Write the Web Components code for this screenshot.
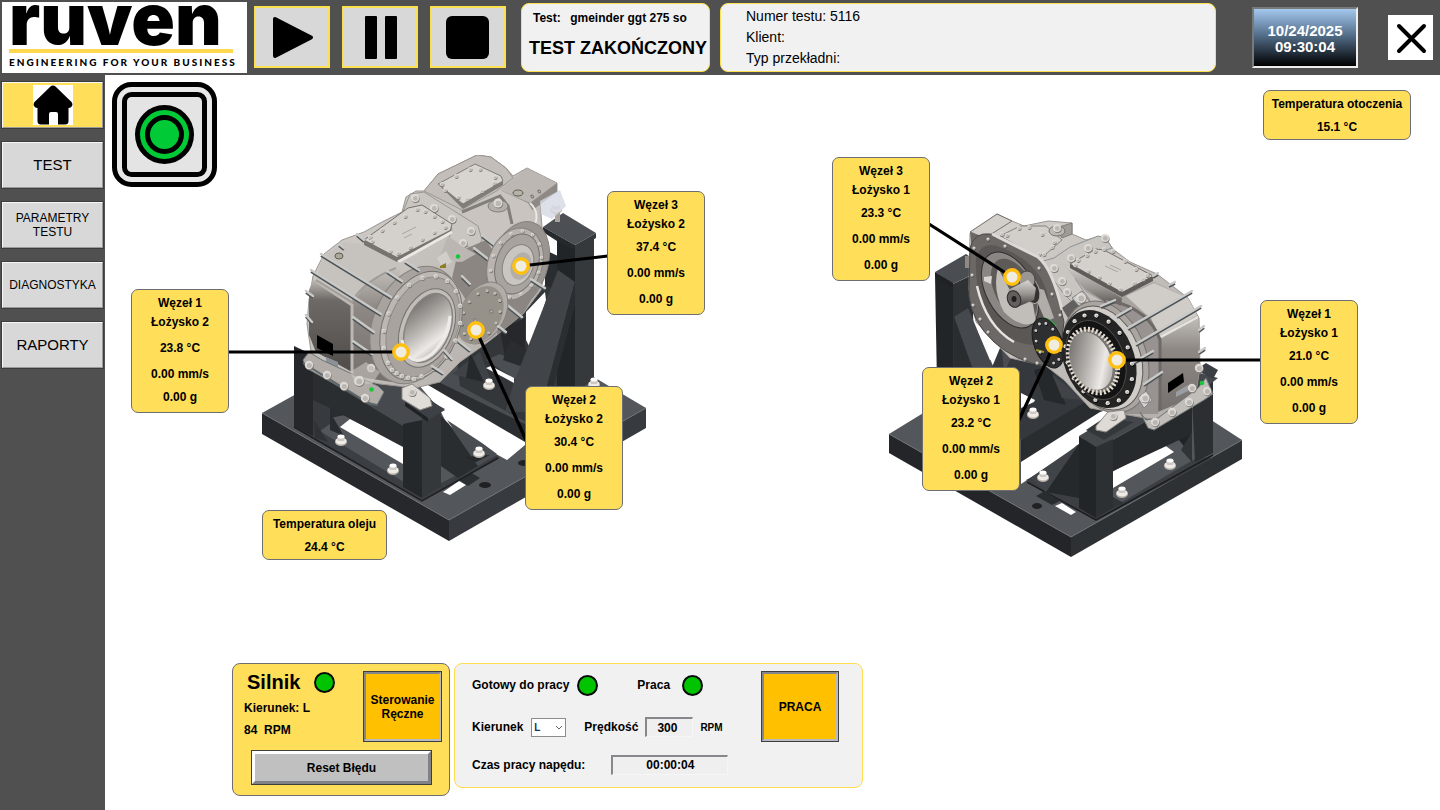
<!DOCTYPE html>
<html lang="pl">
<head>
<meta charset="utf-8">
<title>Ruven – stanowisko testowe</title>
<style>
  body { margin: 0; background: #fff; color: #000; font-family: "Liberation Sans", Arial, sans-serif; font-size: 12px; }
</style>
</head>
<body>
<hmi-app></hmi-app>

<script>
const define = (name, html) => {
  const tpl = document.createElement('template');
  tpl.innerHTML = '<style>*{box-sizing:border-box}</style>' + html;
  customElements.define(name, class extends HTMLElement {
    constructor() {
      super();
      this.attachShadow({ mode: 'open' }).append(tpl.content.cloneNode(true));
    }
  });
};

/* ---------- drawing helpers ---------- */
const poly = (pts, fill, extra = '') => `<polygon points="${pts}" fill="${fill}" ${extra}/>`;
const ell = (cx, cy, rx, ry, rot, fill, extra = '') =>
  `<ellipse cx="${cx}" cy="${cy}" rx="${rx}" ry="${ry}" transform="rotate(${rot} ${cx} ${cy})" fill="${fill}" ${extra}/>`;
const bolt = (x, y, r = 2, light = '#dedbd7', dark = '#7f7b78') =>
  `<circle cx="${x + 0.6}" cy="${y + 1}" r="${r}" fill="${dark}"/><circle cx="${x}" cy="${y}" r="${r}" fill="${light}"/><circle cx="${x + 0.3}" cy="${y + 0.4}" r="${r * 0.6}" fill="#bab6b2"/>`;
const bolts = (list, r, l, d) => list.map(([x, y]) => bolt(x, y, r, l, d)).join('');
const boltRing = (cx, cy, rx, ry, rot, n, r, l, d) => {
  const a = rot * Math.PI / 180, out = [];
  for (let i = 0; i < n; i++) {
    const t = i * 2 * Math.PI / n, x = rx * Math.cos(t), y = ry * Math.sin(t);
    out.push([+(cx + x * Math.cos(a) - y * Math.sin(a)).toFixed(1), +(cy + x * Math.sin(a) + y * Math.cos(a)).toFixed(1)]);
  }
  return bolts(out, r, l, d);
};
const rib = (x1, y1, x2, y2) =>
  `<path d="M${x1} ${y1 + 1.8}L${x2} ${y2 + 1.8}" stroke="#4d5355" stroke-width="2.4"/><path d="M${x1} ${y1}L${x2} ${y2}" stroke="#c9c9c8" stroke-width="2.4" stroke-linecap="round"/>`;
const anchor = (x, y) =>
  `<ellipse cx="${x}" cy="${y + 2}" rx="6" ry="4" fill="#b7b0aa"/><ellipse cx="${x}" cy="${y + 1}" rx="5.5" ry="3.4" fill="#efebe7"/><rect x="${x - 3.5}" y="${y - 4}" width="7" height="5" rx="1.5" fill="#cfc8c2"/><ellipse cx="${x}" cy="${y - 3.5}" rx="3.5" ry="2" fill="#fff"/>`;
const lead = (x1, y1, x2, y2) => `<path d="M${x1} ${y1}L${x2} ${y2}" stroke="#000" stroke-width="3.2"/>`;
const pin = (x, y) => `<circle cx="${x}" cy="${y}" r="7.2" fill="#f0ece0" stroke="#ffc010" stroke-width="3.4"/>`;

const defs = id => `<defs>
  <linearGradient id="side${id}" x1="0" y1="0" x2="0" y2="1"><stop offset="0" stop-color="#bdb8b3"/><stop offset=".22" stop-color="#6d6966"/><stop offset="1" stop-color="#4f4b49"/></linearGradient>
  <linearGradient id="end${id}" x1="0" y1="0" x2="0" y2="1"><stop offset="0" stop-color="#c4c0bb"/><stop offset=".35" stop-color="#8d8884"/><stop offset="1" stop-color="#75706d"/></linearGradient>
  <linearGradient id="top${id}" x1="0" y1="0" x2="1" y2="1"><stop offset="0" stop-color="#d6d2cd"/><stop offset="1" stop-color="#b1aca7"/></linearGradient>
  <linearGradient id="bore${id}" x1="0" y1="0" x2="1" y2="1"><stop offset="0" stop-color="#5d5a58"/><stop offset=".45" stop-color="#b5b1ad"/><stop offset=".7" stop-color="#ece9e6"/><stop offset="1" stop-color="#8b8682"/></linearGradient>
  <linearGradient id="tube${id}" x1="0" y1="0" x2="0" y2="1"><stop offset="0" stop-color="#d8d5d2"/><stop offset=".5" stop-color="#9a9692"/><stop offset="1" stop-color="#403d3c"/></linearGradient>
</defs>`;

/* gearbox seen from the side of the "Łożysko 2" bearings */
const leftMachine = () => defs('L') + [
  // base frame
  poly('262,413 298,393 420,335 592,376 646,408 449,520', '#53565b'),
  poly('262,413 449,520 449,541 262,434', '#26282b'),
  poly('449,520 646,408 646,428 449,541', '#373b3f'),
  '<path d="M262 413L449 520L646 408" fill="none" stroke="#6d7176"/>',
  // rear rail and stand
  poly('418,366 455,350 525,410 525,426 420,374', '#4a4d52'),
  poly('418,372 525,424 525,444 418,384', '#2b2e31'),
  poly('418,384 428,385 525,442 525,445 507,460 474,442 447,424 441,412 430,398', '#fff'),
  poly('455,345 500,330 545,285 560,262 560,385 526,422 460,386', '#33373a'),
  poly('500,330 525,318 525,355 508,372', '#26282b'),
  poly('452,374 480,352 492,384', '#3f4347'),
  poly('470,352 484,382 466,378', '#26292b'),
  poly('486,360 500,354 540,372 535,392', '#4b4e53'),
  poly('486,368 491,366 514,378 514,383', '#fff'),
  poly('510,340 531,352 520,366 503,360', '#2a2d30'),
  poly('526,312 545,292 546,300 531,350 526,340', '#fff'),
  poly('545,250 558,256 558,290 545,285', '#2a2d30'),
  poly('557,238 575,246 575,392 557,392', '#222527'),
  poly('575,246 594,238 594,380 575,392', '#35393c'),
  poly('558,270 575,282 540,412 505,412 513,385', '#414549'),
  poly('575,282 575,305 552,392 540,412', '#2b2e31'),
  poly('543,227 563,213 596,233 575,245', '#4c5055'),
  poly('543,227 575,245 575,250 560,243 543,232', '#26292c'),
  poly('575,245 596,233 596,238 575,250', '#35393c'),
  '<rect x="555" y="205" width="5" height="17" fill="#aaa49f"/>', anchor(556, 208),
  anchor(489, 384), anchor(594, 383),
  // holes through the front frame
  poly('350,419 403,446 403,464 340,427', '#fff'),
  poly('443,492 450,495 466,485 459,481', '#fff'),
  poly('459,480 470,472 480,478 468,486', '#2c2f32'),
  poly('295,428 308,424 404,482 423,492 497,455 500,458 422,501', '#3b3f43'),
  '<path d="M294 427L422 501L498 458" fill="none" stroke="#1d1f21" stroke-width="1.5"/>',
  '<ellipse cx="485" cy="485" rx="6" ry="3" fill="#1f2123"/><ellipse cx="524" cy="463" rx="6" ry="3" fill="#1f2123"/>',
  // front stand
  poly('294,346 313,355 313,436 294,427', '#25272a'),
  poly('313,355 330,362 330,424 313,436', '#373b3f'),
  poly('314,420 328,442 315,438', '#2f3235'), poly('330,412 344,436 330,430', '#2a2d30'),
  poly('330,392 352,408 360,412 330,418', '#2a2d30'),
  poly('313,372 403,424 403,447 330,408 313,400', '#2b2e31'),
  poly('313,372 350,360 445,409 422,420 403,426', '#46494e'),
  poly('403,424 422,420 422,498 403,487', '#25282a'),
  poly('422,418 441,410 441,486 422,498', '#34383b'),
  poly('405,402 422,394 445,410 428,420', '#3d4145'), poly('405,402 428,418 428,422 405,406', '#1f2123'),
  poly('441,416 449,424 478,466 458,478 441,466', '#2a2d30'),
  poly('447,420 482,443 497,454 478,466', '#4a4d52'),
  poly('465,457 490,455 476,462', '#26292b'),
  anchor(341, 440), anchor(393, 469), anchor(479, 452),
  // casing silhouette
  poly('307,324 309,300 313,276 324,254 342,240 364,232 382,222 402,212 406,197 416,191 424,191 438,174 477,155 491,157 506,168 513,176 527,168 557,183 557,192 540,201 543,240 546,262 541,290 523,314 497,335 484,345 460,362 440,382 415,388 380,384 340,376 314,372', 'url(#topL)', 'stroke="#9a9692"'),
  // upper cover block
  poly('424,191 438,174 477,155 491,157 506,168 513,178 495,192 462,210', '#c3beb9', 'stroke="#9a9692"'),
  poly('438,184 475,164 501,176 503,181 463,204', '#d8d4cf', 'stroke="#7f7b78"'),
  poly('438,184 463,204 503,181 503,185 463,209', '#817d79'),
  bolts([[442,184],[456,176],[470,169],[480,169],[495,177],[494,183],[482,191],[467,199],[458,197],[445,190]], 2),
  // rear bracket
  poly('500,192 527,168 557,183 557,192 530,212', '#8e8985'), poly('500,190 527,168 557,183 530,203', '#bcb7b2'),
  poly('540,201 560,190 566,206 552,219 541,214', '#d5d8e2', 'opacity=".8"'),
  ell(518, 193, 5, 3, 0, '#b5b3a6', 'stroke="#5e5e55"'), bolts([[532,196],[539,191]], 1.6, '#6a6663'),
  // upper shoulder
  poly('462,210 500,190 528,203 541,224 520,230 500,245 486,262 470,254', '#c9c4bf'),
  '<path d="M462 212L500 196L508 206L512 224" fill="none" stroke="#827e7a" stroke-width="3"/><path d="M530 203Q542 214 532 230" fill="none" stroke="#e8e6e3" stroke-width="2"/>',
  ell(498, 206, 10, 6, 0, '#b4afab', 'stroke="#827e7a"'), bolt(498, 203, 4.5),
  // joint flange
  poly('403,212 410,194 424,192 478,226 482,240 476,252 464,244 456,252 448,242 452,228 424,206', '#c9c5c0', 'stroke="#9a9692"'),
  bolts([[415,198],[434,208],[452,219],[471,231],[463,243]], 4),
  // main cover plate
  poly('364,240 408,208 422,205 452,224 450,232 397,258', '#d4d0cb', 'stroke="#75716e"'),
  poly('364,240 397,257 450,230 450,234 397,262 364,245', '#77736f'),
  bolts([[370,237],[382,230],[394,222],[405,216],[417,209],[425,211],[434,216],[442,221],[445,227],[434,232],[422,239],[410,247],[398,253],[390,251],[372,241]], 2),
  '<path d="M402 234l14-7M404 238l8-4" stroke="#aaa5a0"/>',
  '<path d="M398 262L452 232" stroke="#e9e7e4" stroke-width="3"/>',
  // left end of the casing
  poly('322,258 344,242 362,244 395,262 420,264 384,276 366,284 352,304 316,282', '#c6c2bd'),
  poly('309,290 313,280 319,281 352,303 352,372 316,352 309,335', 'url(#sideL)'),
  poly('352,303 368,282 400,268 392,382 352,376', 'url(#endL)'),
  '<path d="M317 282L352 305V374" fill="none" stroke="#bcb7b3" stroke-width="3"/>',
  '<path d="M316 280L352 302Q362 282 396 268" fill="none" stroke="#a29d99" stroke-width="2"/>',
  ell(339, 256, 4, 3, 0, '#a9a99b', 'stroke="#5e5e55"'),
  poly('317,335 333,344 333,356 317,348', '#000'), poly('326,357 338,362 338,368 326,363', '#8d9096'),
  // linking valley
  poly('458,252 486,240 498,258 492,284 466,300 452,278', '#8b8682'),
  poly('448,236 462,246 476,254 462,262 440,256', '#bbb6b1'),
  rib(482, 235, 496, 246), rib(474, 248, 492, 262), rib(462, 276, 470, 284),
  poly('437,258 446,251 452,262 442,268', '#d1cdc8'), poly('440,266 446,263 446,268 440,268', '#8d7d23'),
  '<circle cx="458" cy="256" r="6" fill="#bdb8b3"/><circle cx="458" cy="256.500" r="2.300" fill="#19c83a"/>',
  // upper shaft flange
  ell(518, 266, 29, 46, 20, '#9a9591', 'stroke="#85817d"'),
  poly('500,300 540,285 523,314 497,335', '#8b8682'),
  ell(515, 264, 27, 37, 20, '#b9b4af', 'stroke="#85817d"'),
  ell(517, 264, 21, 31, 20, '#a8a39f', 'stroke="#75716e"'),
  boltRing(516, 264, 24, 34, 20, 14, 1.8),
  ell(518, 265, 15, 21, 20, '#c9c5c0', 'stroke="#85817d"'),
  ell(521, 266, 10, 14, 20, '#b3aeaa'),
  rib(506, 304, 522, 317), rib(531, 279, 545, 288),
  // middle bearing cover
  ell(483, 313, 22, 33, 28, '#b2ada9', 'stroke="#85817d"'),
  ell(480, 315, 21, 31, 28, '#979289'),
  boltRing(481, 315, 17, 26, 28, 13, 1.5, '#c5c0bb', '#5e5a58'),
  bolts([[491,311],[475,320]], 1.8, '#77736f'),
  rib(455, 338, 470, 350), rib(498, 326, 506, 332),
  // main flange
  ell(415, 325, 42, 61, 22, '#a8a39f', 'stroke="#85817d"'),
  ell(421, 326, 38, 57, 22, '#bcb7b2', 'stroke="#75716e"'),
  ell(423, 327, 34, 52, 22, '#a8a39f', 'stroke="#8f8b87"'),
  boltRing(422, 327, 36, 53, 22, 18, 2.2),
  ell(427, 328, 26, 41, 22, '#c2bdb9', 'stroke="#75716e"'),
  ell(428, 328, 22, 36, 22, 'url(#boreL)', 'stroke="#85817d" stroke-width="1.5"'),
  '<path d="M402 340Q408 372 432 354Q448 338 450 316" fill="none" stroke="#eeecea" stroke-width="3"/>',
  // cooling ribs
  rib(321, 254, 391, 297), rib(311, 270, 381, 314), rib(306, 291, 313, 296), rib(306, 315, 312, 322),
  rib(339, 244, 344, 248), rib(357, 234, 364, 240), rib(405, 261, 419, 270), rib(387, 271, 402, 281),
  rib(353, 317, 374, 332), rib(353, 341, 372, 354), rib(444, 350, 452, 359), rib(432, 366, 443, 373),
  // feet
  poly('303,360 309,352 322,360 378,386 384,392 377,405 368,402 306,368', '#b1aca8', 'stroke="#6d7476"'),
  '<path d="M303 363L370 404L378 405" fill="none" stroke="#5d6668" stroke-width="2"/>',
  bolts([[309,365],[327,375],[344,386],[365,398],[360,380],[371,368]], 4.2),
  poly('350,372 366,362 380,372 372,384 356,384', '#c9c5c0', 'opacity=".6"'), bolt(359, 381, 5),
  '<circle cx="371.500" cy="389.500" r="2.300" fill="#19c83a"/>',
  poly('402,388 412,384 430,398 432,406 420,410 402,399', '#e0ddd9', 'stroke="#8d8986"'), bolt(412, 392, 4), bolts([[392,370],[402,376],[414,379]], 2.2),
].join('');

/* gearbox seen from the side of the "Łożysko 1" bearings */
const rightMachine = () => defs('R') + [
  poly('889,434 938,404 1000,352 1120,360 1205,416 1242,440 1071,537', '#53565b'),
  poly('889,434 1071,537 1071,557 889,453', '#232528'),
  poly('1071,537 1242,440 1242,459 1071,557', '#2d3134'),
  '<path d="M889 434L1071 537L1242 440" fill="none" stroke="#6d7176"/>',
  // rear column and rail
  poly('935,275 953,284 953,384 937,384', '#222527'), poly('953,284 972,275 975,384 953,384', '#2e3235'),
  poly('935,272 966,254 986,268 953,284', '#4a4d52'), poly('935,272 953,283 953,288 935,277', '#1f2123'),
  '<rect x="965" y="256" width="5" height="12" fill="#8f8a86"/>',
  poly('954,317 968,308 1000,384 978,384', '#45484d'), poly('954,317 978,384 954,384', '#2a2d30'),
  poly('978,331 994,342 1002,352 994,368', '#fff'),
  poly('1000,348 1060,362 1100,396 1021,440 990,372', '#35393d'),
  poly('1034,370 1050,366 1066,405 1044,400', '#26292b'), poly('1052,374 1084,400 1062,398', '#404448'),
  poly('1002,350 1014,350 1004,374', '#4a4d52'),
  poly('1021,408 1034,402 1035,400 1021,393', '#fff'), poly('1021,440 1092,398 1110,408 1021,462', '#2a2d30'),
  poly('1021,462 1100,412 1124,404 1122,414 1088,434 1079,449 1030,478 1021,484', '#fff'),
  anchor(1033, 413),
  poly('1026,480 1044,471 1112,508 1198,457 1213,458 1096,521', '#3b3f43'),
  '<path d="M1027 482L1096 520L1213 455" fill="none" stroke="#1a1c1e" stroke-width="1.500"/>',
  poly('1112,472 1163,444 1174,452 1113,488', '#fff'), poly('1055,506 1062,503 1076,512 1071,515', '#fff'),
  poly('1036,496 1045,491 1060,501 1052,505', '#2a2d30'),
  '<ellipse cx="1037" cy="506" rx="5" ry="3" fill="#1f2123"/>',
  poly('1076,446 1079,444 1079,498 1046,492', '#26292b'), poly('1068,452 1079,444 1046,492 1030,478', '#404448'),
  // front stand
  poly('1179,404 1192,398 1192,456 1179,440', '#202325'), poly('1192,398 1213,378 1213,453 1195,462', '#2b2f32'),
  poly('1113,440 1192,396 1192,434 1113,471', '#272a2d'), poly('1079,436 1106,420 1196,372 1218,378 1200,392 1096,448', '#44474c'),
  poly('1079,436 1096,447 1096,518 1079,508', '#222527'), poly('1096,447 1113,439 1113,508 1096,518', '#2c3033'),
  poly('1181,450 1192,432 1192,462', '#303437'), poly('1113,497 1124,503 1113,508', '#303437'),
  poly('1196,370 1206,363 1218,370 1213,379', '#3b3f43'),
  poly('1086,430 1104,418 1134,422 1104,440', '#34383b'),
  anchor(1043, 476), anchor(1122, 492), anchor(1170, 464),
  // casing silhouette
  poly('970,233 997,214 1012,221 1024,226 1048,221 1072,223 1072,234 1086,240 1103,236 1114,250 1130,262 1157,274 1188,298 1199,318 1200,368 1196,392 1157,420 1122,414 1090,408 1064,380 1046,366 1010,358 976,322 969,290', 'url(#topR)', 'stroke="#9a9692"'),
  poly('970,232 997,214 1012,221 985,238', '#d3cfca', 'stroke="#75716e"'), poly('970,232 985,238 972,250', '#6b6764'),
  poly('1056,228 1072,223 1072,234 1062,238', '#a09b97', 'stroke="#7f7b78"'),
  // upper cover
  poly('1000,236 1020,226 1046,226 1062,240 1046,254 1036,256', '#d2cec9', 'stroke="#85817d"'),
  bolts([[1002,234],[1007,235],[1019,228],[1029,227],[1042,234],[1054,242],[1052,247],[1044,254],[1039,254]], 2),
  ell(1057, 231, 8, 5, 0, '#bcb7b2', 'stroke="#75716e"'), bolt(1057, 228, 4),
  poly('1062,248 1092,240 1130,262 1108,262 1078,258', '#cfcbc6'),
  // joint flange
  poly('1040,262 1054,258 1070,247 1098,236 1106,238 1112,248 1072,262 1076,280 1084,292 1090,300 1078,308 1064,294', '#c9c5c0', 'stroke="#8d9396"'),
  bolts([[1105,238],[1088,248],[1071,258],[1054,268],[1062,281],[1067,292]], 4),
  // casing valley and main cover
  poly('1064,264 1122,296 1154,282 1188,298 1160,320 1120,312 1086,292', '#a8a39f'),
  poly('1064,264 1122,298 1120,312 1084,288', 'url(#tubeR)'),
  poly('1070,264 1096,249 1104,250 1153,276 1123,293', '#d4d0cb', 'stroke="#75716e"'),
  poly('1070,264 1122,292 1153,276 1153,281 1122,297 1070,268', '#5f5c59'),
  bolts([[1078,260],[1087,255],[1095,251],[1104,249],[1113,251],[1125,261],[1136,269],[1147,275],[1143,279],[1134,283],[1120,289],[1109,283],[1099,277],[1088,271],[1075,265]], 2),
  '<path d="M1105 266l13 6M1110 265l11 5" stroke="#a9a49f"/>',
  ell(1147, 309, 5, 3, 0, '#a5a593', 'stroke="#5e5e55"'),
  // right end of the casing
  poly('1126,296 1154,283 1188,298 1197,315 1160,337 1150,318', '#d0ccc8'),
  poly('1160,338 1198,316 1200,368 1195,396 1158,412', 'url(#endR)'),
  poly('1106,300 1150,316 1160,338 1158,414 1124,414', '#989390'),
  '<path d="M1110 300Q1150 310 1160 340V410" fill="none" stroke="#6d6966" stroke-width="3"/><path d="M1161 337L1198 317" stroke="#e6e4e1" stroke-width="2"/>',
  poly('1168,383 1183,373 1184,382 1168,393', '#000'), poly('1176,392 1188,385 1188,391 1176,397', '#9a9da3'),
  // open bell housing
  '<path d="M970 248Q974 232 990 234L1036 256Q1050 266 1056 290L1064 322Q1062 352 1046 366Q1016 362 994 342Q972 322 969 296Z" fill="#6b6866" stroke="#4b4948"/>',
  '<path d="M992 234L1038 257Q1052 268 1062 310" fill="none" stroke="#dcd9d6" stroke-width="3"/>',
  '<path d="M976 258Q982 240 1000 247Q1040 262 1048 296L1050 340Q1030 352 1002 334Q974 310 976 258Z" fill="#5a5755"/>',
  '<path d="M977 286Q986 326 1014 342" fill="none" stroke="#e6e3e0" stroke-width="2.500"/>',
  ell(1010, 290, 24, 41, -28, '#8a8683', 'stroke="#33302f"'),
  ell(1014, 290, 19, 34, -28, '#5d5a58'),
  '<path d="M998 268Q992 290 1004 312Q1022 330 1036 322L1032 298L1012 294Z" fill="#c1bdb9"/>',
  poly('984,277 992,276 991,284 984,281', '#d8d5d2'), poly('1030,286 1044,290 1054,318 1046,322', '#b1ada9'),
  ell(1031, 290, 8, 14, -20, '#353331', 'stroke="#aaa6a2"'), ell(1027, 280, 8, 9, 0, '#9a9692', 'stroke="#4b4948"'),
  poly('1008,290 1028,280 1036,288 1034,300 1017,307', 'url(#tubeR)'),
  ell(1014, 299, 6.5, 8.5, -20, '#625f5d', 'stroke="#2d2b2a"'), ell(1014, 299, 2.5, 3, 0, '#201f1e'),
  bolts([[974,248],[988,239],[1005,246],[1039,268],[1052,294],[1060,315],[1037,363],[1025,359],[988,332],[980,319],[973,305],[972,275],[1050,352]], 1.5, '#e9e6e3', '#4b4948'),
  // middle cover
  '<path d="M1036 321Q1046 314 1056 326" fill="none" stroke="#3f9a4b" stroke-width="2"/>',
  ell(1048, 343, 14, 26, -20, '#2e2f30', 'stroke="#1b1b1c"'), '<path d="M1036 350l8 2" stroke="#9a9320" stroke-width="2"/>',
  boltRing(1048, 343, 11, 21, -20, 11, 1.4, '#d8d4d0', '#111'),
  poly('1062,308 1078,296 1090,302 1068,318', '#62605e'), poly('1072,298 1082,291 1090,302 1080,307', '#cfcbc6', 'stroke="#7d8386"'), bolt(1081, 298, 5),
  // main flange and splined bore
  ell(1106, 357, 40, 58, -22, '#aaa5a1', 'stroke="#75716e"'), ell(1103, 358, 37, 54, -22, '#d0ccc8', 'stroke="#5d5a58"'),
  ell(1099, 359, 35, 51, -22, '#242425'),
  boltRing(1099, 359, 31, 46, -22, 17, 2.1, '#efece9', '#000'),
  ell(1096, 360, 28, 41, -22, '#141415', 'stroke="#4b4948"'),
  ell(1093, 361, 23, 33, -22, '#77736f'),
  ell(1093, 361, 23, 33, -22, 'none', 'stroke="#e5ddd2" stroke-width="5" stroke-dasharray="2 2"'),
  ell(1091, 361, 20, 30, -22, 'url(#boreR)'),
  // cooling ribs
  rib(1192, 291, 1128, 328), rib(1201, 306, 1136, 344), rib(1204, 326, 1199, 330), rib(1205, 348, 1199, 352),
  rib(1158, 273, 1153, 276), rib(1175, 282, 1169, 285), rib(1115, 300, 1101, 306), rib(1131, 308, 1117, 316),
  rib(1153, 351, 1134, 362), rib(1162, 372, 1144, 384),
  // feet
  poly('1140,412 1146,420 1158,418 1198,388 1206,378 1213,394 1204,400 1154,430 1148,428', '#c1bdb9', 'stroke="#6d7476"'),
  bolts([[1155,422],[1172,412],[1189,402],[1207,391],[1192,388],[1199,368]], 4.2),
  poly('1138,398 1146,391 1152,400 1144,408', '#d8d5d1', 'stroke="#7d8386"'), bolt(1145, 398, 4.6),
  '<circle cx="1202" cy="383" r="2.300" fill="#19c83a"/>',
  poly('1096,426 1108,412 1124,410 1126,418 1106,432 1096,430', '#dedbd7', 'stroke="#8d8986"'), bolt(1113, 416, 4),
].join('');

/* ---------- small parts ---------- */
define('info-tile', `
<style>
  :host { display: block; border: 1px solid #6e6d72; border-radius: 7px; background: #ffde59; padding: 4px 0 0; font-weight: bold; text-align: center; }
  ::slotted(p) { margin: 0; line-height: 26px; }
  ::slotted(h3) { margin: 0; font-size: 12px; line-height: 19px; }
</style><slot></slot>`);

define('led-lamp', `
<style>:host { display: block; width: 21px; height: 21px; border: 2px solid #0a0a0a; border-radius: 50%; background: #00c400; box-sizing: border-box; flex: none; }</style>`);

define('light-box', `
<style>:host { display: block; width: 105px; height: 105px; } svg { display: block; }</style>
<svg viewBox="0 0 105 105" width="105" height="105" role="img" aria-label="Lampka gotowości">
  <rect x="2.500" y="2.500" width="100" height="100" rx="17" fill="#e9e9e9" stroke="#000" stroke-width="5"/>
  <rect x="12.500" y="12.500" width="80" height="80" rx="7" fill="#e4e4e4" stroke="#000" stroke-width="5"/>
  <circle cx="52.500" cy="52.500" r="27" fill="#00ca36" stroke="#000" stroke-width="5"/>
  <circle cx="52.500" cy="52.500" r="17" fill="#00ca36" stroke="#000" stroke-width="5"/>
</svg>`);

define('nav-button', `
<style>
  :host { display: block; }
  button { display: block; width: 100%; height: 46px; padding: 0; font: inherit; line-height: 14px; color: #000; background: #d8d8d8; border: 1px solid; border-color: #f6f6f6 #9a9a9a #9a9a9a #f6f6f6; box-shadow: 0 0 0 1px #3c3c3c; }
  :host([active]) button { background: #ffde59; }
  :host([large]) button { font-size: 15px; }
  ::slotted(svg) { display: block; margin: 0 auto; }
</style><button type="button"><slot></slot></button>`);

define('media-button', `
<style>
  :host { display: block; }
  button { display: block; width: 76px; height: 62px; padding: 0; background: #d8d8d8; border: 2px solid #fbe04f; }
  ::slotted(svg) { display: block; }
</style><button type="button"><slot></slot></button>`);

define('ruven-logo', `
<style>
  :host { display: block; box-sizing: border-box; width: 245px; height: 71px; padding: 0 7px; background: #fff; }
  .name { height: 45px; font: 900 72px/34px Inter, sans-serif; white-space: nowrap; }
  .bar { width: 224px; height: 4px; margin: 2px 0 3px; background: #ffd84f; }
  .tag { font: 900 10px/13px Lato, sans-serif; letter-spacing: 2px; white-space: nowrap; }
</style>
<div class="name">ruven</div><div class="bar"></div><div class="tag">ENGINEERING FOR YOUR BUSINESS</div>`);

define('top-bar', `
<style>
  :host { display: flex; align-items: center; height: 75px; box-sizing: border-box; padding: 0 7px 1px 2px; background: #505050; }
  .media { display: flex; gap: 12px; margin: 0 15px 0 7px; }
  .card { height: 69px; border: 1px solid #fbe04f; border-radius: 8px; background: #f1f1f1; }
  .status { width: 189px; margin-right: 10px; padding: 4px 0 0 7px; font-weight: bold; white-space: nowrap; }
  .status p { margin: 0 0 5px 4px; line-height: 20px; }
  .status span { margin-left: 6px; }
  .status strong { display: block; font-size: 18px; line-height: 30px; }
  .info { flex: 1; min-width: 0; padding: 2px 0 0 25px; font-size: 14px; line-height: 21px; }
  .info p { margin: 0; }
  time { display: block; width: 106px; height: 61px; margin: 0 30px 0 36px; padding-top: 14px; border: 2px solid; border-color: #77797b #eee #eee #77797b; background: linear-gradient(#a5c8ee, #55708c 45%, #000); color: #fff; font-weight: bold; font-size: 15px; line-height: 16px; text-align: center; }
  .close { width: 45px; height: 45px; padding: 0; border: 0; background: #fff; }
  .close svg { display: block; }
</style>
<ruven-logo></ruven-logo>
<div class="media">
  <media-button><svg width="72" height="58" viewBox="0 0 72 58" role="img" aria-label="Start"><path d="M19 11V48L55 29.500Z" stroke="#000" stroke-width="4" stroke-linejoin="round"/></svg></media-button>
  <media-button><svg width="72" height="58" viewBox="0 0 72 58" role="img" aria-label="Pauza"><rect x="21" y="8" width="12" height="43" rx="1"/><rect x="41" y="8" width="12" height="43" rx="1"/></svg></media-button>
  <media-button><svg width="72" height="58" viewBox="0 0 72 58" role="img" aria-label="Stop"><rect x="14" y="8" width="43" height="43" rx="6"/></svg></media-button>
</div>
<section class="card status"><p>Test: <span>gmeinder ggt 275 so</span></p><strong>TEST ZAKOŃCZONY</strong></section>
<section class="card info"><p>Numer testu: 5116</p><p>Klient:</p><p>Typ przekładni:</p></section>
<time datetime="2025-10-24T09:30:04">10/24/2025<br>09:30:04</time>
<button class="close" type="button" aria-label="Zamknij"><svg width="45" height="45" viewBox="0 0 45 45"><path d="M11 11L36 36M36 11L11 36" stroke="#000" stroke-width="4" stroke-linecap="round"/></svg></button>`);

define('side-nav', `
<style>
  :host { display: block; background: #505050; width: 105px; box-sizing: border-box; padding: 7px 2px 0; }
  nav { display: grid; gap: 14px; }
</style>
<nav>
  <nav-button active><svg width="40" height="40" viewBox="0 0 40 40" role="img" aria-label="Start"><rect width="40" height="40" fill="#fff"/><path d="M17.500 1.500Q20 -0.500 22.500 1.500L38.500 17Q40 19 39 21Q38 23 35.500 23V36Q35.500 39.500 32 39.500H25V29Q25 27 23 27H18Q16 27 16 29V39.500H8Q4.500 39.500 4.500 36V23Q2 23 1 21Q0 19 1.500 17Z"/></svg></nav-button>
  <nav-button large>TEST</nav-button>
  <nav-button>PARAMETRY<br>TESTU</nav-button>
  <nav-button>DIAGNOSTYKA</nav-button>
  <nav-button large>RAPORTY</nav-button>
</nav>`);

/* a drawing with measuring points; tiles sit over it */
const card = (cls, w, b, t) =>
  `<info-tile class="${cls}"><h3>Węzeł ${w}</h3><h3>Łożysko ${b}</h3><p>${t} °C</p><p>0.00 mm/s</p><p>0.00 g</p></info-tile>`;
const viewStyle = `
  :host { display: block; position: relative; height: 405px; flex: none; }
  svg { display: block; }
  info-tile { position: absolute; box-sizing: border-box; width: 98px; height: 124px; }`;

define('left-view', `
<style>${viewStyle}
  :host { width: 576px; }
  .a { left: 1px; top: 134px; } .b { left: 477px; top: 36px; } .c { left: 395px; top: 231px; }
  .a p:nth-of-type(1) { line-height: 32px; }
  .a p:nth-of-type(2) { line-height: 20px; }
  .oil { left: 132px; top: 355px; width: 125px; height: 50px; }
</style>
<svg width="576" height="405" viewBox="130 155 576 405" role="img" aria-label="Przekładnia, strona 2">
${leftMachine()}${lead(229, 352, 401, 352)}${lead(476, 330, 526, 440)}${lead(521, 266, 608, 256)}${pin(401, 352)}${pin(476, 330)}${pin(521, 266)}</svg>
${card('a', 1, 2, '23.8')}${card('b', 3, 2, '37.4')}${card('c', 2, 2, '30.4')}
<info-tile class="oil"><h3>Temperatura oleju</h3><p>24.4 °C</p></info-tile>`);

define('right-view', `
<style>${viewStyle}
  :host { width: 526px; }
  .a { left: 0; top: 2px; } .b { left: 90px; top: 212px; } .c { left: 428px; top: 145px; }
</style>
<svg width="526" height="405" viewBox="832 155 526 405" role="img" aria-label="Przekładnia, strona 1">
${rightMachine()}${lead(929, 224, 1012, 277)}${lead(1054, 345, 1019, 420)}${lead(1117, 360, 1262, 360)}${pin(1012, 277)}${pin(1054, 345)}${pin(1117, 360)}</svg>
${card('a', 3, 1, '23.3')}${card('b', 2, 1, '23.2')}${card('c', 1, 1, '21.0')}`);

define('action-button', `
<style>
  :host { display: block; }
  button { display: block; width: 100%; height: 100%; padding: 0; font: bold 12px/14px "Liberation Sans", Arial, sans-serif; color: #000; background: #ffc000; border: 3px solid; border-color: #85878c #b9bbc0 #b9bbc0 #85878c; outline: 1px solid #3e3e3e; outline-offset: -1px; }
  :host([grey]) button { background: #c0c0c0; border-color: #fff #808288 #808288 #fff; outline-offset: 0; }
</style><button type="button"><slot></slot></button>`);

define('motor-panel', `
<style>
  :host { display: grid; grid-template-columns: 1fr 79px; align-content: start; box-sizing: border-box; width: 218px; height: 133px; padding: 7px 7px 0 11px; border: 1px solid #6e6d72; border-radius: 8px; background: #ffde59; font-weight: bold; }
  .title { display: flex; align-items: center; gap: 14px; margin-bottom: 4px; padding-left: 3px; }
  h2 { margin: 0; font-size: 20px; line-height: 22px; }
  p { margin: 0; line-height: 22px; white-space: pre; }
  .manual { height: 71px; }
  .reset { grid-column: 1 / -1; height: 33px; margin: 9px 11px 0 8px; }
</style>
<div><div class="title"><h2>Silnik</h2><led-lamp></led-lamp></div><p>Kierunek: L</p><p>84  RPM</p></div>
<action-button class="manual">Sterowanie<br>Ręczne</action-button>
<action-button class="reset" grey>Reset Błędu</action-button>`);

define('drive-panel', `
<style>
  :host { display: flex; justify-content: space-between; box-sizing: border-box; width: 409px; height: 125px; padding: 7px 23px 0 17px; border: 1px solid #ffdc50; border-radius: 8px; background: #f1f1f1; font-weight: bold; white-space: nowrap; }
  .row { display: flex; align-items: center; height: 28px; }
  .row + .row { height: 20px; margin-top: 18px; }
  .gap { margin: 0 12px 0 39px; }
  .pick { display: grid; margin: 0 18px 0 8px; }
  .pick > * { grid-area: 1 / 1; }
  .pick svg { justify-self: end; align-self: center; margin-right: 3px; pointer-events: none; }
  select { appearance: none; width: 35px; height: 19px; padding: 0 0 0 2px; border: 1px solid #8c8c8c; border-radius: 0; background: #fff; color: #1b2a5c; font: bold 10px/15px "Liberation Sans", Arial, sans-serif; }
  input, output { box-sizing: border-box; height: 20px; padding: 0; border: 2px solid; border-color: #86888c #f6f6f6 #f6f6f6 #86888c; border-right-width: 1px; border-bottom-width: 1px; background: #efefef; color: #000; font: bold 12px/17px "Liberation Sans", Arial, sans-serif; text-align: center; border-radius: 0; }
  input { width: 48px; margin: 0 7px; padding-right: 5px; }
  output { width: 117px; margin-left: 26px; }
  small { font-size: 10px; }
  .lamp { margin-left: 8px; }
  .start { width: 78px; height: 71px; }
</style>
<div>
  <div class="row"><span>Gotowy do pracy</span><led-lamp class="lamp"></led-lamp><span class="gap">Praca</span><led-lamp></led-lamp></div>
  <div class="row">
    <label for="dir">Kierunek</label>
    <span class="pick"><select id="dir"><option>L</option><option>P</option></select><svg width="8" height="5" viewBox="0 0 8 5"><path d="M1 1L4 4L7 1" fill="none" stroke="#666"/></svg></span>
    <label for="speed">Prędkość</label><input id="speed" type="text" value="300"><small>RPM</small>
  </div>
  <div class="row"><label for="run">Czas pracy napędu:</label><output id="run">00:00:04</output></div>
</div>
<action-button class="start">PRACA</action-button>`);

define('hmi-app', `
<style>
  :host { display: grid; grid-template: auto 1fr / 105px 1fr; min-height: 100vh; }
  top-bar { grid-column: 1 / -1; }
  main { display: flex; flex-direction: column; min-width: 0; }
  .stage { display: grid; flex: 1; min-height: 588px; }
  .stage > * { grid-area: 1 / 1; align-self: start; }
  .views { display: flex; justify-content: space-between; padding: 80px 82px 0 25px; }
  light-box { margin: 7px; }
  .ambient { justify-self: end; box-sizing: border-box; width: 148px; height: 50px; margin: 15px 29px; }
  .panels { display: flex; align-items: flex-start; gap: 4px; padding: 0 0 14px 127px; }
</style>
<top-bar></top-bar>
<side-nav></side-nav>
<main>
  <div class="stage">
    <light-box></light-box>
    <info-tile class="ambient"><h3>Temperatura otoczenia</h3><p>15.1 °C</p></info-tile>
    <div class="views"><left-view></left-view><right-view></right-view></div>
  </div>
  <div class="panels"><motor-panel></motor-panel><drive-panel></drive-panel></div>
</main>`);
</script>
</body>
</html>
